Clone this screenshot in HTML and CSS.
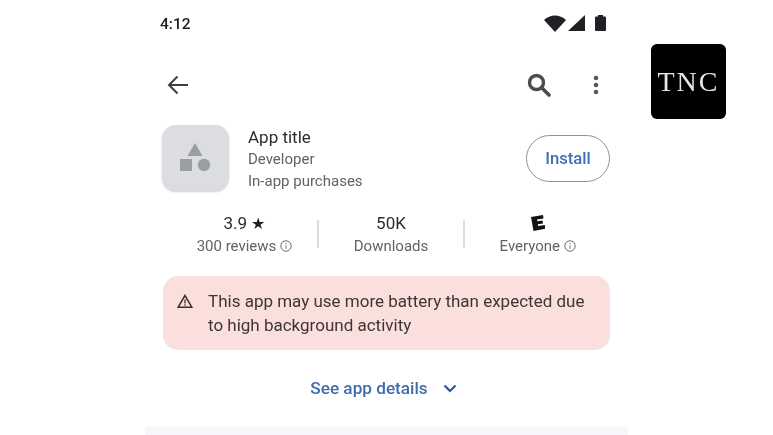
FILE: index.html
```html
<!DOCTYPE html>
<html lang="en">
<head>
  <meta charset="UTF-8">
  <title>App listing</title>
  <link rel="stylesheet" href="styles.css">
</head>
<body>
  <div class="phone">
    <div class="status-bar">
      <span class="clock">4:12</span>
      <div class="status-icons">
        <svg width="22" height="17" viewBox="0 0 22 17"><path d="M0 5C3 2 7 .5 11 .5s8 1.500 11 4.500L11 17z" fill="#202124"/></svg>
        <svg class="signal" width="17" height="16" viewBox="0 0 17 16"><path d="M17 0v16H0z" fill="#202124"/></svg>
        <svg class="battery" width="11" height="16" viewBox="0 0 11 16"><path d="M3 0h5v1.500h2a1 1 0 0 1 1 1V15a1 1 0 0 1-1 1H1a1 1 0 0 1-1-1V2.500a1 1 0 0 1 1-1h2z" fill="#202124"/></svg>
      </div>
    </div>

    <div class="toolbar">
      <svg width="22" height="20" viewBox="0 0 22 20"><path d="M21 10H2M10.500 1.500L2 10l8.500 8.500" fill="none" stroke="#3c4043" stroke-width="2"/></svg>
      <div class="toolbar-right">
        <svg width="24" height="24" viewBox="0 0 24 24"><circle cx="9.500" cy="9.500" r="7" fill="none" stroke="#494c50" stroke-width="3.400"/><path d="M14.500 14.500l7.500 7.500" stroke="#494c50" stroke-width="3.600" stroke-linecap="round"/></svg>
        <svg width="6" height="20" viewBox="0 0 6 20"><circle cx="3" cy="3" r="2.300" fill="#55585c"/><circle cx="3" cy="10" r="2.300" fill="#55585c"/><circle cx="3" cy="17" r="2.300" fill="#55585c"/></svg>
      </div>
    </div>

    <div class="app-row">
      <div class="app-icon">
        <svg width="32" height="30" viewBox="0 0 32 30"><path d="M15 0l7.500 13h-15z" fill="#9a9da1"/><rect x="0" y="16" width="12" height="12" fill="#9a9da1"/><circle cx="24" cy="22" r="6.200" fill="#9a9da1"/></svg>
      </div>
      <div class="app-info">
        <div class="app-title">App title</div>
        <div class="app-meta">Developer</div>
        <div class="app-meta">In-app purchases</div>
      </div>
      <button class="install-btn">Install</button>
    </div>

    <div class="stats">
      <div class="stat">
        <div class="stat-value">3.9 <span class="star">★</span></div>
        <div class="stat-label">300 reviews
          <svg class="info" width="12" height="12" viewBox="0 0 12 12"><circle cx="6" cy="6" r="5.200" fill="none" stroke="#6b6e72"/><path d="M6 5.300v3.500M6 3v1.200" stroke="#6b6e72"/></svg>
        </div>
      </div>
      <div class="stat-divider"></div>
      <div class="stat">
        <div class="stat-value">50K</div>
        <div class="stat-label">Downloads</div>
      </div>
      <div class="stat-divider"></div>
      <div class="stat">
        <div class="stat-value">
          <svg class="rating-e" width="14" height="16" viewBox="0 0 14 16"><path d="M0 2L12 0l.5 3.500-6.500 1 .3 1.800 5.200-.8.500 3-5.200.8.300 1.800 6.700-1 .700 3.500L2.500 16z" fill="#111"/></svg>
        </div>
        <div class="stat-label">Everyone
          <svg class="info" width="12" height="12" viewBox="0 0 12 12"><circle cx="6" cy="6" r="5.200" fill="none" stroke="#6b6e72"/><path d="M6 5.300v3.500M6 3v1.200" stroke="#6b6e72"/></svg>
        </div>
      </div>
    </div>

    <div class="warning">
      <svg width="16" height="14" viewBox="0 0 16 14"><path d="M8 1.500L1.200 13.200h13.600z" fill="none" stroke="#3a3030" stroke-width="1.500"/><path d="M8 5.500v4M8 10.300v1.400" stroke="#3a3030" stroke-width="1.300"/></svg>
      <p>This app may use more battery than expected due to high background activity</p>
    </div>

    <div class="details-link">
      <span>See app details</span>
      <svg width="14" height="9" viewBox="0 0 14 9"><path d="M1.500 1.500L7 7l5.500-5.500" fill="none" stroke="#2f5597" stroke-width="2.200"/></svg>
    </div>

    <div class="bottom-strip"></div>
  </div>

  <div class="logo">TNC</div>
</body>
</html>
```

FILE: styles.css
```css
html, body {
  height: 100%;
}

body {
  margin: 0;
  background-color: #ffffff;
  font-family: Roboto, "Liberation Sans", sans-serif;
  display: flex;
  align-items: flex-start;
  overflow: hidden;
}

/* the source is a soft, upscaled capture */
.phone, .logo {
  filter: blur(0.35px);
}

.phone {
  width: 483px;
  height: 435px;
  margin-left: 145px;
  display: flex;
  flex-direction: column;
}

.status-bar {
  height: 16px;
  margin-top: 15px;
  padding: 0 22px 0 15px;
  display: flex;
  justify-content: space-between;
  align-items: center;
}

.clock {
  margin-top: 1px;
  font-size: 15.500px;
  font-weight: 500;
  color: #202124;
}

.status-icons {
  display: flex;
  align-items: center;
}

.signal {
  margin-left: 2px;
}

.battery {
  margin-left: 10px;
}

.toolbar {
  height: 24px;
  margin-top: 42px;
  padding: 0 29px 0 22px;
  display: flex;
  justify-content: space-between;
  align-items: center;
}

.toolbar-right {
  display: flex;
  align-items: center;
  gap: 42px;
}

.app-row {
  margin-top: 28px;
  height: 66px;
  padding: 0 18px 0 17px;
  display: flex;
  align-items: center;
}

.app-icon {
  width: 67px;
  height: 66px;
  border-radius: 14px;
  background-color: #dcdde0;
  box-shadow: 0 1px 2px rgba(0, 0, 0, 0.2);
  display: flex;
  align-items: center;
  justify-content: center;
}

.app-info {
  flex: 1;
  margin: 1px 0 0 19px;
}

.app-title {
  font-size: 17px;
  line-height: 22px;
  color: #2b2c2f;
}

.app-meta {
  font-size: 15px;
  line-height: 22px;
  color: #5f6368;
}

.install-btn {
  width: 84px;
  height: 47px;
  border: 1.500px solid #8f9194;
  border-radius: 24px;
  background: #ffffff;
  color: #3b71b8;
  font-family: inherit;
  font-size: 16.700px;
  font-weight: 500;
}

.stats {
  margin-top: 20px;
  padding: 0 18px 0 27px;
  height: 46px;
  display: flex;
  align-items: center;
}

.stat {
  flex: 1;
  text-align: center;
}

.stat-value {
  height: 22px;
  line-height: 20px;
  font-size: 17px;
  color: #2b2c2f;
}

.star {
  font-size: 15.500px;
  color: #202124;
}

.rating-e {
  vertical-align: -2px;
}

.stat-label {
  margin-top: 1px;
  line-height: 20px;
  font-size: 15px;
  color: #5f6368;
}

.info {
  vertical-align: -1px;
}

.stat-divider {
  width: 2px;
  height: 28px;
  background-color: #dcdde0;
}

.warning {
  margin: 19px 18px 0;
  height: 74px;
  box-sizing: border-box;
  padding: 0 16px 0 14px;
  border-radius: 15px;
  background-color: #fbdfdc;
  display: flex;
  align-items: center;
  gap: 15px;
}

.warning svg {
  flex-shrink: 0;
  margin-bottom: 24px;
}

.warning p {
  margin: 0;
  font-size: 17px;
  line-height: 24px;
  color: #3e3535;
}

.details-link {
  margin-top: 27px;
  height: 22px;
  padding-right: 6px;
  display: flex;
  align-items: center;
  justify-content: center;
  gap: 15px;
  font-size: 17.200px;
  font-weight: 500;
  color: #3f6dab;
}

.bottom-strip {
  margin-top: 28px;
  flex: 1;
  background-color: #f6f7fc;
}

.logo {
  width: 75px;
  height: 75px;
  margin: 44px 0 0 23px;
  border-radius: 6px;
  background-color: #000000;
  color: #e4e4e4;
  font-family: "Liberation Serif", serif;
  font-size: 28px;
  letter-spacing: 2px;
  display: flex;
  align-items: center;
  justify-content: center;
}
```
